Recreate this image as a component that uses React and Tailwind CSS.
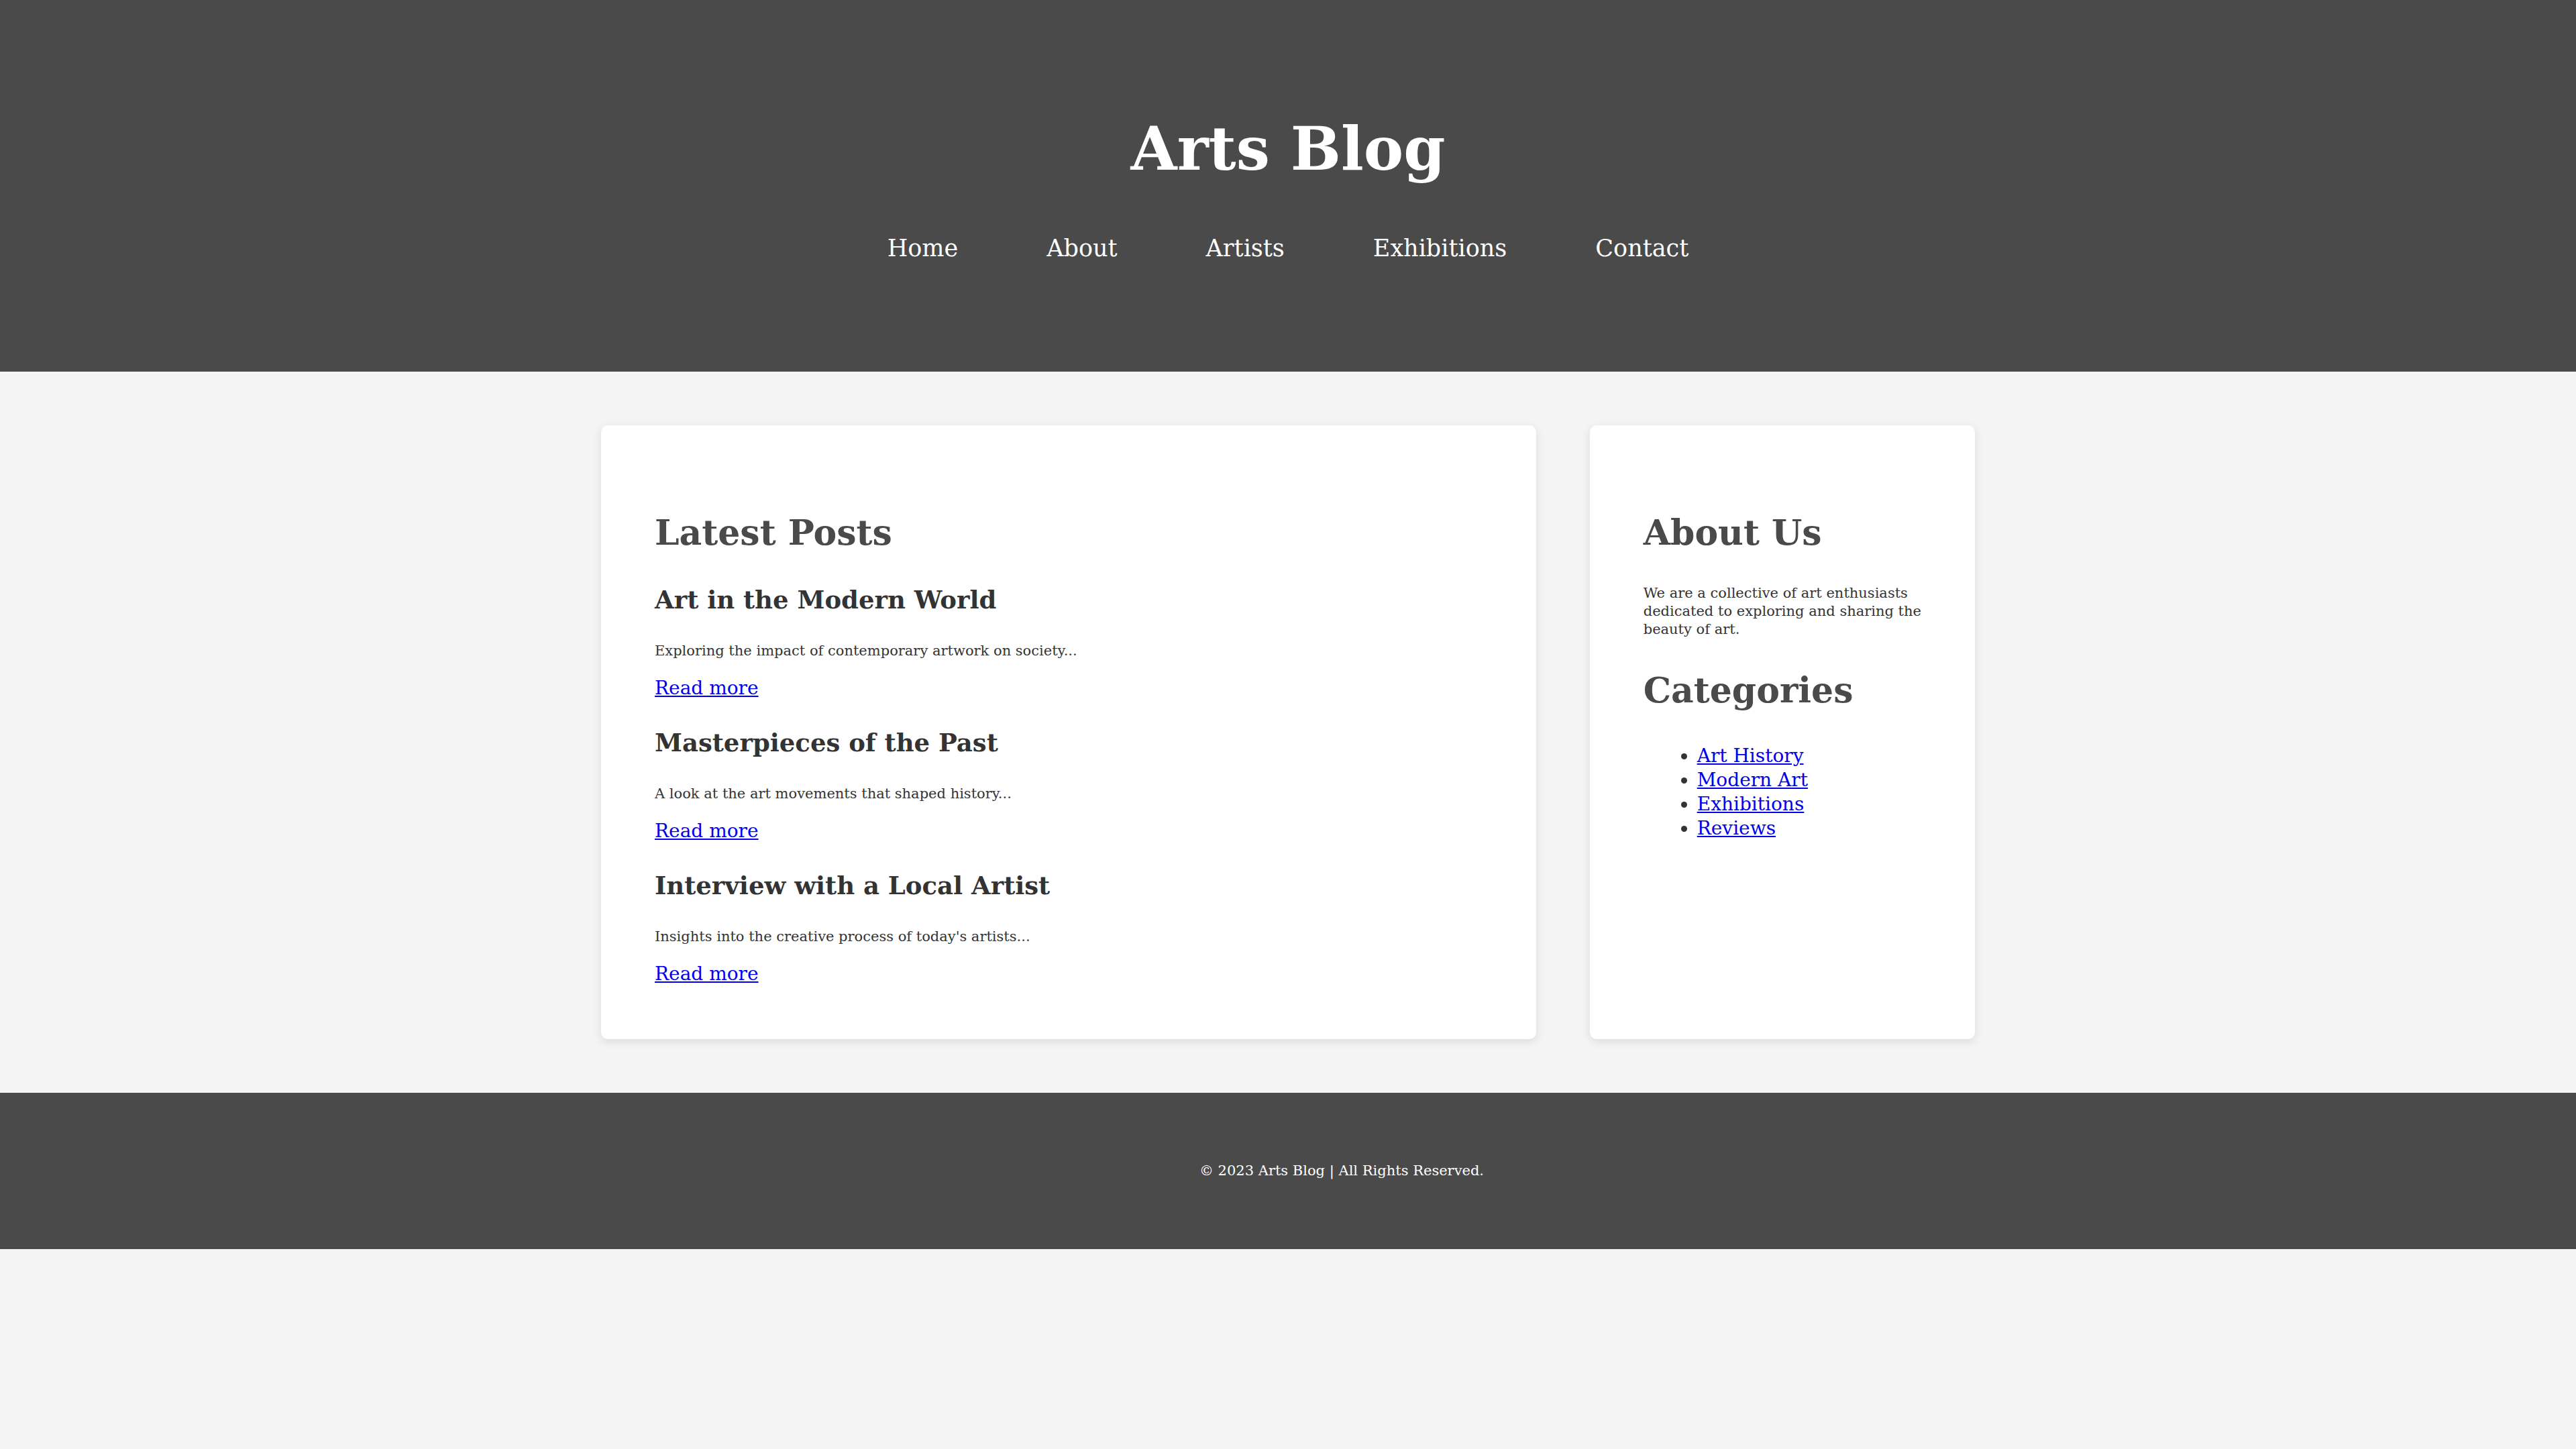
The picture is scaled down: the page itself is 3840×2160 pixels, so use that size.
import React from "react";

const navLinks = ["Home", "About", "Artists", "Exhibitions", "Contact"];

const posts = [
  { title: "Art in the Modern World", excerpt: "Exploring the impact of contemporary artwork on society..." },
  { title: "Masterpieces of the Past", excerpt: "A look at the art movements that shaped history..." },
  { title: "Interview with a Local Artist", excerpt: "Insights into the creative process of today's artists..." },
];

const categories = ["Art History", "Modern Art", "Exhibitions", "Reviews"];

export default function App() {
  return (
    <div className="min-h-screen bg-[#f4f4f4] font-['DejaVu_Serif',Georgia,serif]">
      {/* Header */}
      <header className="bg-[#4a4a4a] text-white flex flex-col items-center pt-[177px] pb-[166px]">
        <h1 className="text-[89px] leading-none font-bold">Arts Blog</h1>
        <nav className="mt-[87px] flex gap-[132px]">
          {navLinks.map((link) => (
            <a key={link} href="#" className="text-[35px] leading-none text-white">
              {link}
            </a>
          ))}
        </nav>
      </header>

      {/* Main */}
      <main className="w-[2048px] mx-auto py-[80px] flex gap-[80px]">
        <section className="flex-[3] bg-white rounded-[10px] shadow-[0_4px_14px_rgba(0,0,0,0.1)] px-[80px] pt-[80px] pb-[83px]">
          <h2 className="mt-[54px] text-[52px] leading-none font-bold text-[#4a4a4a]">Latest Posts</h2>
          {posts.map((post, i) => (
            <article key={post.title} className={i === 0 ? "mt-[56px]" : "mt-[49px]"}>
              <h3 className="text-[37px] leading-none font-bold text-[#333]">{post.title}</h3>
              <p className="mt-[47px] text-[21px] leading-none text-[#333]">{post.excerpt}</p>
              <div className="mt-[31px] text-[28px] leading-none">
                <a href="#" className="text-[#0000ee] underline">Read more</a>
              </div>
            </article>
          ))}
        </section>

        <aside className="flex-[1] bg-white rounded-[10px] shadow-[0_4px_14px_rgba(0,0,0,0.1)] p-[80px]">
          <h2 className="mt-[54px] text-[52px] leading-none font-bold text-[#4a4a4a]">About Us</h2>
          <p className="mt-[51px] text-[21px] leading-[27px] text-[#333] whitespace-nowrap">
            We are a collective of art enthusiasts
            <br />
            dedicated to exploring and sharing the
            <br />
            beauty of art.
          </p>
          <h2 className="mt-[51px] text-[52px] leading-none font-bold text-[#4a4a4a]">Categories</h2>
          <ul className="mt-[54px] pl-[80px] list-disc text-[28px] leading-[36px] text-[#333]">
            {categories.map((c) => (
              <li key={c}>
                <a href="#" className="text-[#0000ee] underline">{c}</a>
              </li>
            ))}
          </ul>
        </aside>
      </main>

      {/* Footer */}
      <footer className="bg-[#4a4a4a] h-[233px] flex items-center justify-center pl-[160px]">
        <p className="text-[21px] leading-none text-white">© 2023 Arts Blog | All Rights Reserved.</p>
      </footer>
    </div>
  );
}
